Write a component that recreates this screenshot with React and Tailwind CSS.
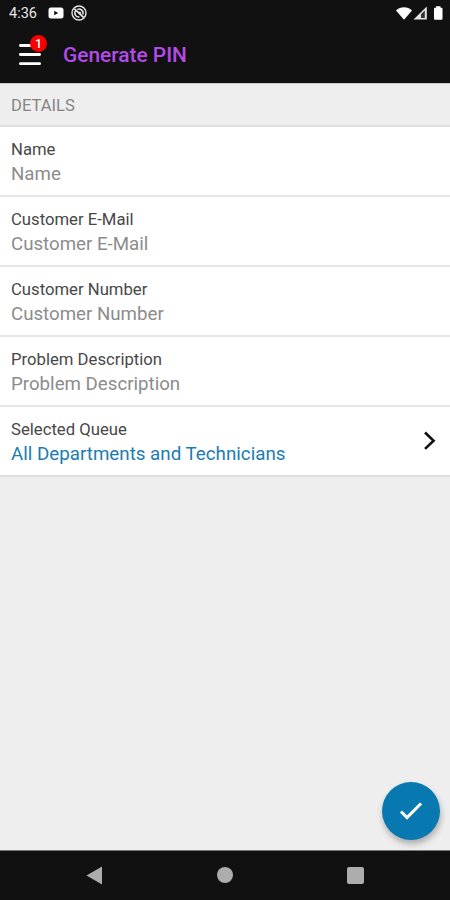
const FIELDS = ["Name", "Customer E-Mail", "Customer Number", "Problem Description"];

function StatusBar() {
  return (
    <div className="flex h-[26px] items-center justify-between pl-[9px] pr-[7px]">
      <div className="flex items-center">
        <span className="w-[29px] pt-[2px] text-[14.5px] leading-none whitespace-nowrap text-[#e8e8e8]">4:36</span>
        <svg className="ml-[10px]" width="16" height="12" viewBox="0 0 16 12" aria-hidden="true">
          <rect x="0.5" y="0.5" width="15" height="11" rx="2.5" fill="#fff" />
          <path d="M6.2 3.8 10.2 6l-4 2.2z" fill="#111" />
        </svg>
        <svg className="ml-[7px]" width="16" height="16" viewBox="0 0 16 16" fill="none" stroke="#e6e6e6" aria-hidden="true">
          <circle cx="8" cy="8" r="7" strokeWidth="1.4" />
          <path d="M4.7 5.6A4 4 0 0 0 8.5 12M6.4 4.4A4 4 0 0 1 11.8 9.4" strokeWidth="1.5" />
          <path d="M3.5 3.8 12.5 12.4" strokeWidth="1.7" />
          <path d="M8 7.2 9.6 8.8" strokeWidth="2.4" />
        </svg>
      </div>
      <svg width="48" height="16" viewBox="0 0 48 16" aria-hidden="true">
        <path d="M1 5.5C5.5 1.300 12.500 1.300 17 5.500L9 14.700z" fill="#fff" />
        <path d="M31.800 1.500V14.500H18.500z" fill="#e4e4e4" />
        <path d="M29.800 5.500V13H26V9.300z" fill="#333" />
        <path d="M41 1.200h4.500v1.600h1q1 0 1 1v9.900q0 1-1 1h-6.500q-1 0-1-1V3.800q0-1 1-1H41z" fill="#fff" />
      </svg>
    </div>
  );
}

function AppBar() {
  return (
    <div className="flex h-[57px] items-center pl-[19px]">
      <button type="button" className="relative h-6 w-[22px]" aria-label="Open menu">
        <svg width="22" height="24" viewBox="0 0 22 24" stroke="#fff" strokeWidth="2.8" strokeLinecap="round" aria-hidden="true">
          <path d="M1.400 2.500H20.600M1.400 11.500H20.600M1.400 20.700H20.600" />
        </svg>
        <span className="absolute -top-[8px] left-[11px] flex h-[17px] w-[17px] items-center justify-center rounded-full bg-[#f80000] pt-[2px] text-[12.5px] font-medium leading-none text-white">
          1
        </span>
      </button>
      <h1 className="ml-[22px] pt-px text-[20.9px] font-medium leading-6 text-[#b44be8]">Generate PIN</h1>
    </div>
  );
}

function FieldRow({ label, children }) {
  return (
    <div className="flex h-[70px] items-center border-b-2 border-[#e6e6e6] bg-white pl-[11px]">
      <div className="flex flex-col pt-px">
        <span className="text-[16.7px] leading-6 text-[#484848]">{label}</span>
        {children}
      </div>
    </div>
  );
}

export default function App() {
  return (
    <div className="relative flex h-[900px] w-[450px] flex-col overflow-hidden bg-[#eeeeee] font-['Roboto',sans-serif]">
      <header className="h-[83px] shrink-0 bg-[#111111]">
        <StatusBar />
        <AppBar />
      </header>

      <main className="flex-1 border-t border-[#c8c8c8]">
        <div className="flex h-[43px] items-center border-b-2 border-[#dedede] pt-[3px] pl-[11px] text-[16.6px] leading-5 text-[#858585]">
          DETAILS
        </div>
        {FIELDS.map((field) => (
          <FieldRow key={field} label={field}>
            <span className="text-[18.7px] leading-6 text-[#8c8c8c]">{field}</span>
          </FieldRow>
        ))}
        <div className="flex h-[70px] items-center justify-between border-b-2 border-[#dedede] bg-white pl-[11px] pr-[14px]">
          <div className="flex flex-col pt-px">
            <span className="text-[16.7px] leading-6 text-[#484848]">Selected Queue</span>
            <span className="text-[18.75px] leading-6 text-[#1c7cb0]">All Departments and Technicians</span>
          </div>
          <svg width="13" height="20" viewBox="0 0 13 20" fill="none" stroke="#111" strokeWidth="2.6" aria-hidden="true">
            <path d="M2 1.500 10.600 9.700 2 17.900" />
          </svg>
        </div>
      </main>

      <button
        type="button"
        className="absolute right-[10px] bottom-[60px] flex h-[58px] w-[58px] items-center justify-center rounded-full bg-[#0879b0] shadow-[1px_4px_6px_rgba(0,0,0,0.28)]"
        aria-label="Confirm"
      >
        <svg width="24" height="20" viewBox="0 0 24 20" fill="none" stroke="#fff" strokeWidth="3" aria-hidden="true">
          <path d="M2 10.500 8 16.600 22 2.500" />
        </svg>
      </button>

      <nav className="flex h-[50px] shrink-0 items-center justify-between border-t border-[#777] bg-[#111111] pr-[86px] pb-px pl-[86px]">
        <svg width="17" height="19" viewBox="0 0 17 19" aria-hidden="true">
          <path d="M.5 9.500 16 .5V18.500z" fill="#adadad" />
        </svg>
        <span className="h-4 w-4 rounded-full bg-[#adadad]" />
        <span className="h-[17px] w-[17px] rounded-[2px] bg-[#adadad]" />
      </nav>
    </div>
  );
}
